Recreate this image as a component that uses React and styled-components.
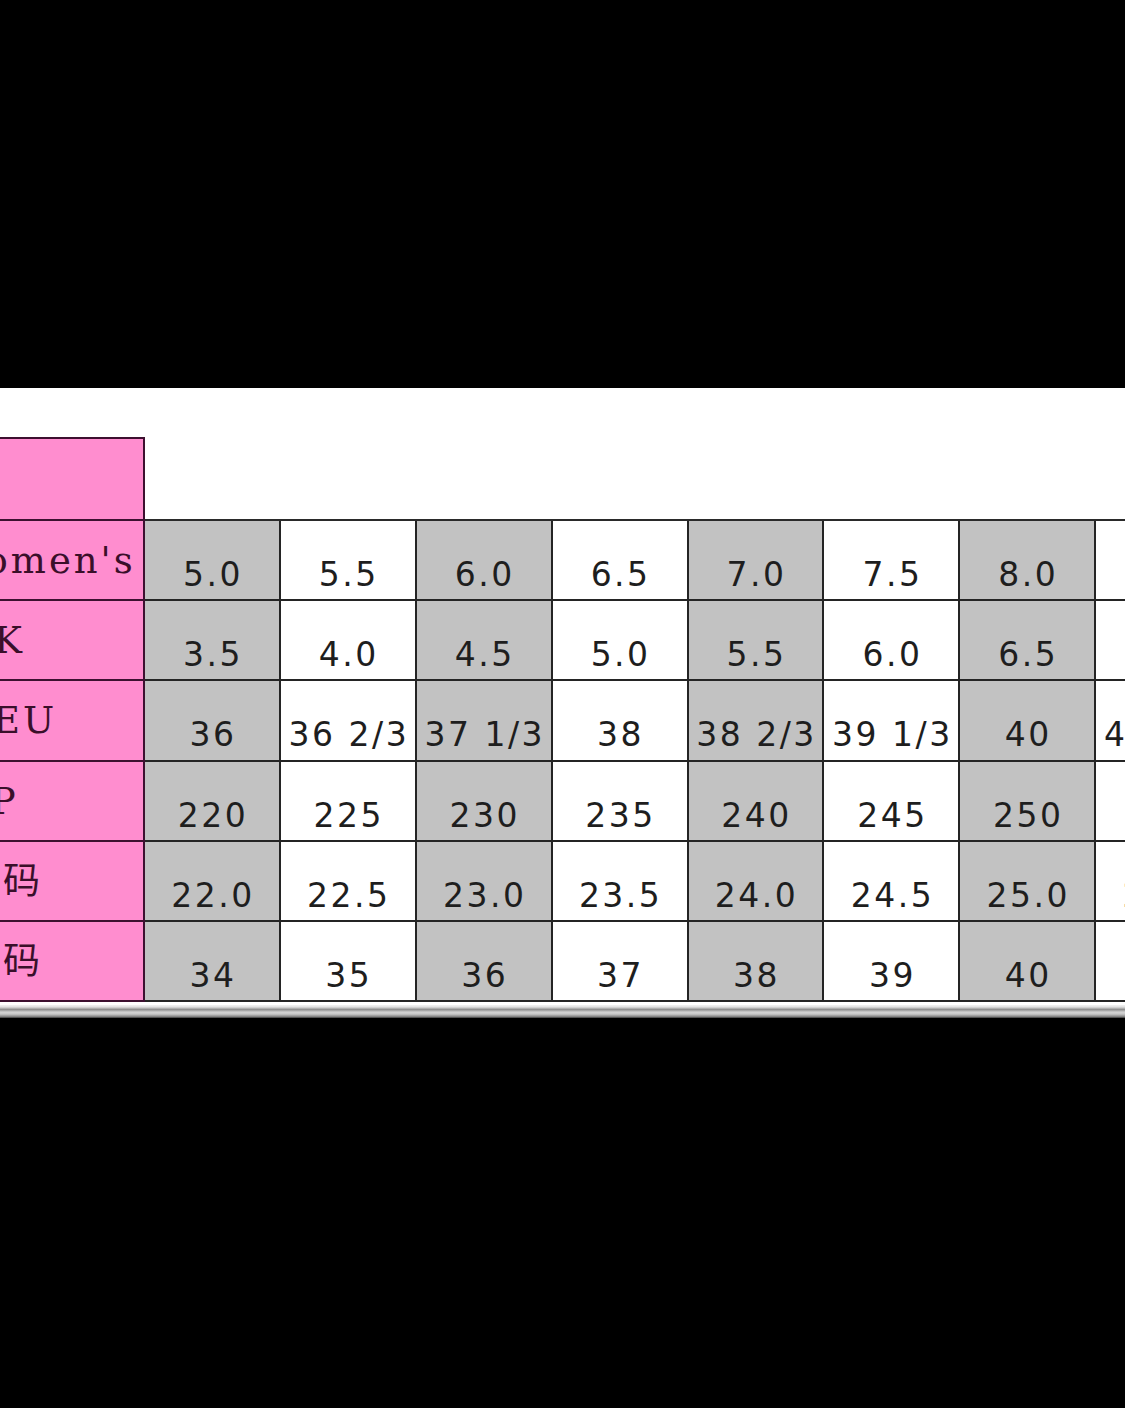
import React from "react";
import styled, { createGlobalStyle } from "styled-components";

const GlobalStyle = createGlobalStyle`
  html, body {
    margin: 0;
    padding: 0;
    background: #000;
    overflow: hidden;
  }
`;

const Page = styled.main`
  width: 1125px;
  height: 1408px;
  padding-top: 388px;
  box-sizing: border-box;
  background: #000;
`;

const Sheet = styled.section`
  background: #fff;
  padding: 49px 0 3px;
  overflow: hidden;
`;

const Chart = styled.div`
  display: grid;
  grid-template-columns: 235px repeat(8, 135.9px);
  grid-template-rows: 84px repeat(6, 80.2px);
  width: max-content;
  margin-left: -90px;
`;

const Corner = styled.div`
  box-sizing: border-box;
  background: #ff8dcf;
  border-top: 2px solid #3d1030;
  border-right: 2px solid #3d1030;
  border-bottom: 2px solid #3d1030;
`;

const Blank = styled.div`
  box-sizing: border-box;
  border-bottom: 2px solid #2a2a2a;
`;

const Label = styled.div`
  box-sizing: border-box;
  background: #ff8dcf;
  border-right: 2px solid #3d1030;
  border-bottom: 2px solid #3d1030;
  padding: 21px 0 0 ${(p) => p.$indent}px;
  font-family: "DejaVu Serif", "Noto Sans CJK SC", serif;
  font-size: 37px;
  line-height: 37px;
  letter-spacing: 3px;
  color: #3a0f2a;
  white-space: pre;
`;

const Cell = styled.div`
  box-sizing: border-box;
  background: ${(p) => (p.$shade ? "#c2c2c2" : "#fff")};
  border-right: 2px solid #242424;
  border-bottom: 2px solid #242424;
  padding: 37px 0 0 2px;
  text-align: center;
  font-family: "DejaVu Sans", sans-serif;
  font-size: 33px;
  line-height: 33px;
  letter-spacing: 2.5px;
  color: #1e1e1e;
  white-space: nowrap;
`;

const Edge = styled.div`
  height: 13px;
  background: linear-gradient(
    #f2f2f2 0%,
    #e0e0e0 15%,
    #8e8e8e 35%,
    #d4d4d4 55%,
    #c8c8c8 70%,
    #8a8a8a 88%,
    #3a3a3a 100%
  );
`;

const rows = [
  { label: "Women's", indent: 37, values: ["5.0", "5.5", "6.0", "6.5", "7.0", "7.5", "8.0", "8.5"] },
  { label: "UK", indent: 50, values: ["3.5", "4.0", "4.5", "5.0", "5.5", "6.0", "6.5", "7.0"] },
  { label: "EU", indent: 83, values: ["36", "36 2/3", "37 1/3", "38", "38 2/3", "39 1/3", "40", "40 2/3"] },
  { label: "JP", indent: 63, values: ["220", "225", "230", "235", "240", "245", "250", "255"] },
  { label: "日本码", indent: 13, values: ["22.0", "22.5", "23.0", "23.5", "24.0", "24.5", "25.0", "25.5"] },
  { label: "中国码", indent: 13, values: ["34", "35", "36", "37", "38", "39", "40", "41"] },
];

export default function App() {
  return (
    <>
      <GlobalStyle />
      <Page>
        <Sheet>
          <Chart>
            <Corner />
            {rows[0].values.map((_, i) => (
              <Blank key={"h" + i} />
            ))}
            {rows.map((row) => (
              <React.Fragment key={row.label}>
                <Label $indent={row.indent}>{row.label}</Label>
                {row.values.map((v, i) => (
                  <Cell key={i} $shade={i % 2 === 0}>
                    {v}
                  </Cell>
                ))}
              </React.Fragment>
            ))}
          </Chart>
        </Sheet>
        <Edge />
      </Page>
    </>
  );
}
